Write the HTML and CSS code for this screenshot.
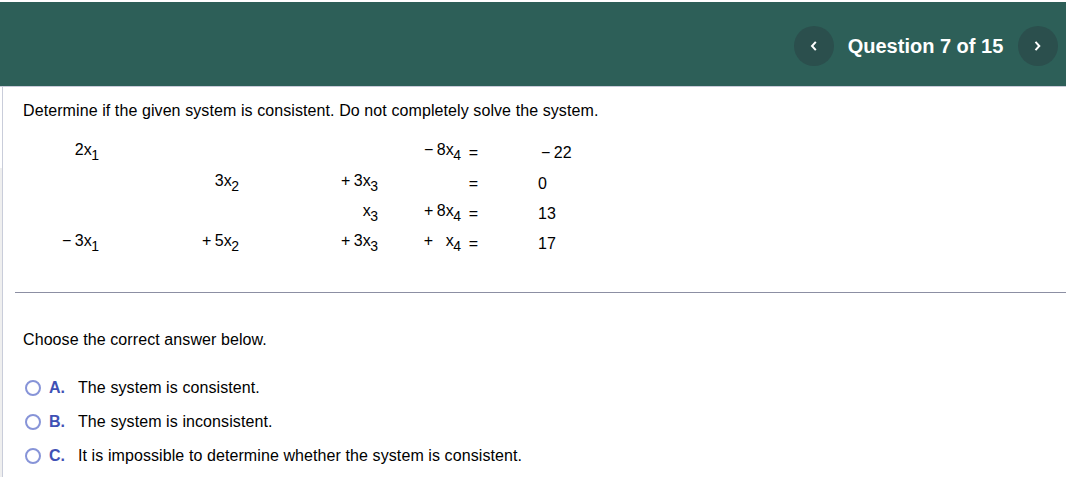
FILE: index.html
```
<!DOCTYPE html>
<html lang="en">
<head>
<meta charset="utf-8">
<title>Question 7 of 15</title>
<link rel="stylesheet" href="styles.css">
</head>
<body>
<header class="topbar">
  <button class="nav" aria-label="Previous question"><svg width="8" height="12" viewBox="0 0 8 12"><path d="M5.8 1.8 2 6 5.8 10.2"/></svg></button>
  <h1 class="title">Question 7 of 15</h1>
  <button class="nav" aria-label="Next question"><svg width="8" height="12" viewBox="0 0 8 12"><path d="M1.5 1.8 5.3 6 1.5 10.2"/></svg></button>
</header>
<div class="page">
  <div class="gutter"></div>
  <main class="content">
    <p class="prompt">Determine if the given system is consistent. Do not completely solve the system.</p>
    <div class="system">
      <span class="term">2x<sub>1</sub></span><span></span><span></span><span class="term"><i class="op">−</i>8x<sub>4</sub></span><span class="eq">=</span><span class="rhs neg"><i class="op">−</i>22</span>
      <span></span><span class="term">3x<sub>2</sub></span><span class="term"><i class="op">+</i>3x<sub>3</sub></span><span></span><span class="eq">=</span><span class="rhs">0</span>
      <span></span><span></span><span class="term">x<sub>3</sub></span><span class="term"><i class="op">+</i>8x<sub>4</sub></span><span class="eq">=</span><span class="rhs">13</span>
      <span class="term"><i class="op">−</i>3x<sub>1</sub></span><span class="term"><i class="op">+</i>5x<sub>2</sub></span><span class="term"><i class="op">+</i>3x<sub>3</sub></span><span class="term"><i class="op wide">+</i>x<sub>4</sub></span><span class="eq">=</span><span class="rhs">17</span>
    </div>
    <hr class="rule">
    <p class="choose">Choose the correct answer below.</p>
    <div class="choices">
      <label class="choice"><span class="radio"></span><b class="letter">A.</b><span class="text">The system is consistent.</span></label>
      <label class="choice"><span class="radio"></span><b class="letter">B.</b><span class="text">The system is inconsistent.</span></label>
      <label class="choice"><span class="radio"></span><b class="letter">C.</b><span class="text">It is impossible to determine whether the system is consistent.</span></label>
    </div>
  </main>
</div>
</body>
</html>
```
FILE: styles.css
```
* { box-sizing: border-box; }
body {
  margin: 0;
  padding-top: 2px;
  height: 477px;
  overflow: hidden;
  background: #fff;
  color: #000;
  font: 16px/20px "Liberation Sans", Arial, sans-serif;
}
p { margin: 0; }
.topbar {
  display: flex;
  align-items: center;
  justify-content: flex-end;
  height: 85px;
  padding: 3px 8.5px 0 0;
  background: #2d5f58;
  border-bottom: 1px solid #c9cbd9;
}
.title {
  width: 184px;
  margin: 0;
  text-align: center;
  font-size: 20px;
  line-height: 24px;
  color: #fff;
}
.nav {
  display: grid;
  place-items: center;
  width: 40px;
  height: 40px;
  padding: 0;
  border: 0;
  border-radius: 50%;
  background: #2b4f4d;
}
.nav svg { fill: none; stroke: #fff; stroke-width: 2; }
.page { display: flex; height: 390px; }
.gutter {
  width: 3px;
  border-right: 1px solid #c9cdda;
  background: linear-gradient(#fff 81px, #efefef 81px);
}
.content { flex: 1; padding: 14px 0 0 12px; }
.prompt, .choose { padding-left: 8px; white-space: nowrap; }
.prompt, .choose, .text { letter-spacing: 0.09px; }
.system {
  display: grid;
  grid-template-columns: 84px 140px 139px 83px 17px 1fr;
  grid-template-rows: 31px 30px 30px 30px;
  margin-top: 19px;
  height: 152px;
}
.term { text-align: right; white-space: nowrap; }
.term sub { margin-left: -0.5px; font-size: 14px; line-height: 0; position: relative; top: 5px; vertical-align: baseline; }
.op { font-style: normal; margin-right: 3.5px; }
.op.wide { margin-right: 12.5px; }
.eq { padding-top: 3px; text-align: right; }
.rhs { padding: 3px 0 0 60px; }
.rhs.neg { padding-left: 63px; }
.rule { margin: 0; border: 0; height: 1px; background: #8c8fa3; }
.choose { margin-top: 37px; }
.choices { display: grid; gap: 14px; margin-top: 28px; padding-left: 10px; }
.choice { display: flex; align-items: center; height: 20px; white-space: nowrap; }
.radio { width: 16px; height: 16px; border: 2px solid #8794d8; border-radius: 50%; }
.letter { width: 29px; margin-left: 8px; color: #3f51b5; }
```
